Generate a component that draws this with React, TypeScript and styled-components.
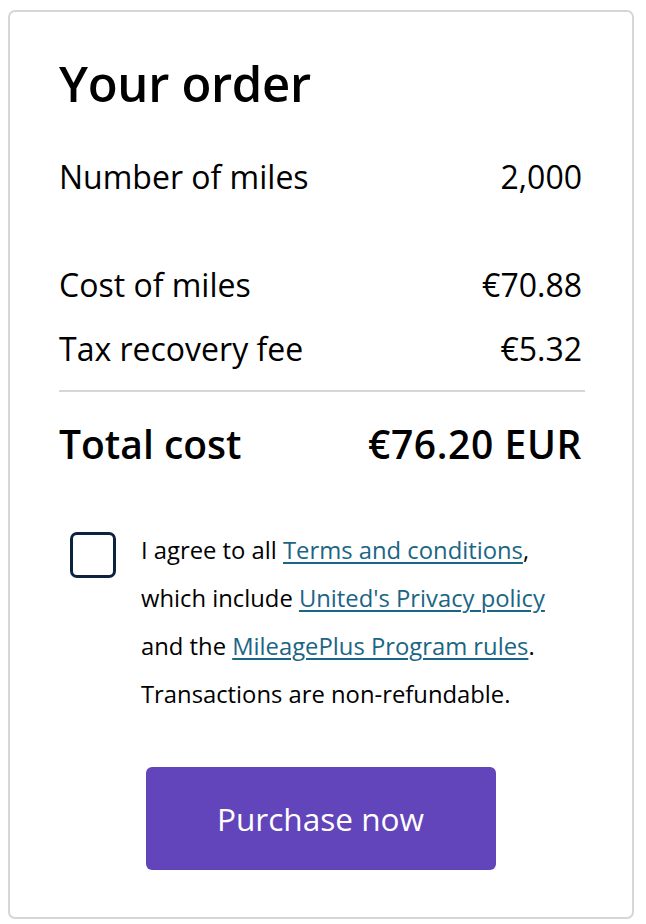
import React from "react";
import styled, { createGlobalStyle } from "styled-components";

const GlobalStyle = createGlobalStyle`
  html, body {
    margin: 0;
    padding: 0;
    background: #ffffff;
  }
  body {
    font-family: "Open Sans", "Liberation Sans", sans-serif;
    color: #000000;
  }
`;

const Page = styled.div`
  padding: 10px 12px 4px 8px;
`;

const Card = styled.section`
  border: 2px solid #d6d6d6;
  border-radius: 7px;
  padding: 36px 50px 47px 49px;
  display: flex;
  flex-direction: column;
  height: 909px;
  box-sizing: border-box;
`;

const Title = styled.h1`
  margin: 0;
  font-size: 49px;
  font-weight: 600;
  line-height: 70px;
  letter-spacing: -0.3px;
`;

const Row = styled.div<{ $gap?: number }>`
  display: flex;
  justify-content: space-between;
  align-items: center;
  font-size: 32px;
  line-height: 64px;
  margin-top: ${(p) => p.$gap ?? 0}px;
`;

const Divider = styled.hr`
  border: none;
  border-top: 2px solid #d6d6d6;
  margin: 9px 0 0;
  width: calc(100% + 3px);
`;

const TotalRow = styled.div`
  display: flex;
  justify-content: space-between;
  align-items: center;
  font-size: 39px;
  font-weight: 600;
  line-height: 50px;
  margin-top: 27px;
`;

const TotalValue = styled.span`
  letter-spacing: 0.6px;
`;

const Agreement = styled.div`
  display: flex;
  gap: 25px;
  margin-top: 57px;
  padding-left: 11px;
`;

const Box = styled.div`
  width: 46px;
  height: 46px;
  border: 3px solid #0c2340;
  border-radius: 7px;
  box-sizing: border-box;
  flex-shrink: 0;
  margin-top: 6px;
`;

const AgreeText = styled.p`
  margin: 0;
  font-size: 23.8px;
  line-height: 48px;
`;

const Link = styled.a`
  color: #1b6585;
  text-decoration: underline;
  text-underline-offset: 3px;
  text-decoration-thickness: 1.5px;
`;

const Purchase = styled.button`
  align-self: center;
  margin-top: 49px;
  width: 350px;
  height: 103px;
  border: none;
  border-radius: 6px;
  background: #6244bb;
  color: #ffffff;
  font-family: "Open Sans", "Liberation Sans", sans-serif;
  font-size: 31.6px;
  font-weight: 400;
`;

const App = () => {
  return (
    <Page>
      <GlobalStyle />
      <Card>
        <Title>Your order</Title>
        <Row $gap={27}>
          <span>Number of miles</span>
          <span>2,000</span>
        </Row>
        <Row $gap={44}>
          <span>Cost of miles</span>
          <span>€70.88</span>
        </Row>
        <Row>
          <span>Tax recovery fee</span>
          <span>€5.32</span>
        </Row>
        <Divider />
        <TotalRow>
          <span>Total cost</span>
          <TotalValue>€76.20 EUR</TotalValue>
        </TotalRow>
        <Agreement>
          <Box />
          <AgreeText>
            I agree to all <Link href="#">Terms and conditions</Link>,
            <br />
            which include <Link href="#">United's Privacy policy</Link>
            <br />
            and the <Link href="#">MileagePlus Program rules</Link>.
            <br />
            Transactions are non-refundable.
          </AgreeText>
        </Agreement>
        <Purchase type="button">Purchase now</Purchase>
      </Card>
    </Page>
  );
};

export default App;
